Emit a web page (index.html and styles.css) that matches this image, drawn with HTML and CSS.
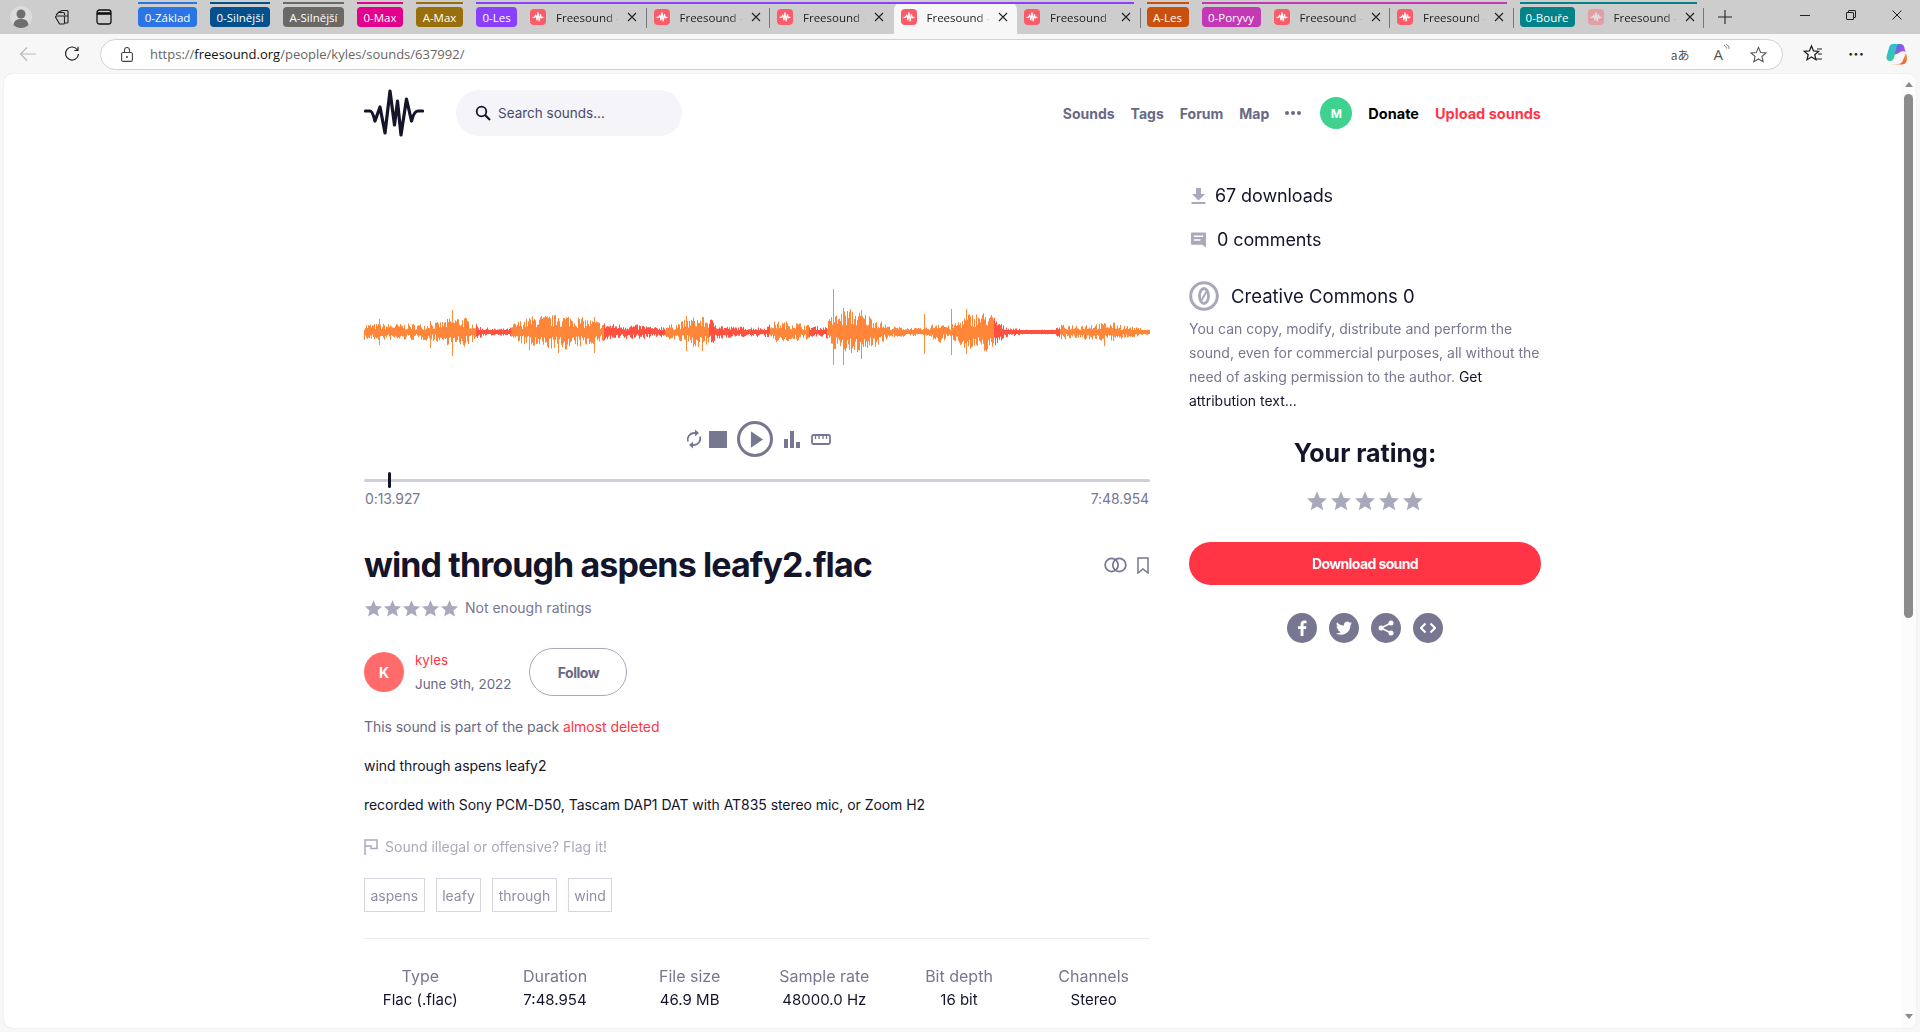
FILE: index.html
```html
<!DOCTYPE html>
<html lang="en">
<head>
    <meta charset="UTF-8">
    <title>Freesound - wind through aspens leafy2.flac</title>
    <link rel="stylesheet" href="styles.css">
</head>
<body>
    <svg class="sprite" width="0" height="0">
        <symbol id="fav" viewBox="0 0 16 16">
            <rect width="16" height="16" rx="4" fill="#fd5b69"/>
            <path d="M2.5 8.3H4.6L5.8 6 7 11 8 3.5 9.2 12 10.4 5.5 11.4 9 12 8.3H13.5" fill="none" stroke="#fff" stroke-width="1.2" stroke-linejoin="round"/>
        </symbol>
        <symbol id="star" viewBox="0 0 24 24">
            <path d="M12 1.5l3.1 7.2 7.7.7-5.8 5.1 1.8 7.6L12 18.1l-6.800 4 1.800-7.600L1.200 9.400l7.700-.700z"/>
        </symbol>
        <symbol id="close" viewBox="0 0 10 10">
            <path d="M1 1l8 8M9 1l-8 8" fill="none" stroke="#222" stroke-width="1.100"/>
        </symbol>
    </svg>

    <!-- browser tab strip -->
    <div class="tabstrip">
        <div class="strip-icons">
            <svg class="profile" viewBox="0 0 22 22"><circle cx="11" cy="11" r="11" fill="#dcdcdc"/><circle cx="11" cy="8" r="4.500" fill="#6e6e6e"/><path d="M3.500 19c.5-4.500 3.500-6 7.500-6s7 1.500 7.500 6c-2 2-4.500 3-7.500 3s-5.500-1-7.500-3z" fill="#6e6e6e"/></svg>
            <svg class="strip-icon ws" viewBox="0 0 16 16"><path d="M4 3.500L8 1.500h5a1 1 0 011 1v4M2 6l2.500-2.500h5a1 1 0 011 1v2M1.500 8a1 1 0 011-1h4l3 0a1 1 0 011 1v6a1 1 0 01-1 1H6a1 1 0 01-1-1zM11 7h3v6a1 1 0 01-1 1h-2" fill="none" stroke="#222" stroke-width="1.100"/></svg>
            <svg class="strip-icon tb" viewBox="0 0 16 16"><rect x="1" y="1" width="14" height="14" rx="2.500" fill="none" stroke="#111" stroke-width="1.300"/><path d="M1 4.500h14" stroke="#111" stroke-width="2.600"/></svg>
        </div>

        <div class="group g-zaklad"><span class="chip">0-Základ</span></div>
        <div class="group g-silnejsi0"><span class="chip">0-Silnější</span></div>
        <div class="group g-silnejsiA"><span class="chip">A-Silnější</span></div>
        <div class="group g-max0"><span class="chip">0-Max</span></div>
        <div class="group g-maxA"><span class="chip">A-Max</span></div>
        <div class="group group-tabs g-les0">
            <span class="chip">0-Les</span>
            <div class="tab sep"><svg class="favicon"><use href="#fav"/></svg><span class="tab-title">Freesound -</span><svg class="tab-x"><use href="#close"/></svg></div>
            <div class="tab sep"><svg class="favicon"><use href="#fav"/></svg><span class="tab-title">Freesound -</span><svg class="tab-x"><use href="#close"/></svg></div>
            <div class="tab"><svg class="favicon"><use href="#fav"/></svg><span class="tab-title">Freesound -</span><svg class="tab-x"><use href="#close"/></svg></div>
            <div class="tab active"><svg class="favicon"><use href="#fav"/></svg><span class="tab-title">Freesound -</span><svg class="tab-x"><use href="#close"/></svg></div>
            <div class="tab sep"><svg class="favicon"><use href="#fav"/></svg><span class="tab-title">Freesound -</span><svg class="tab-x"><use href="#close"/></svg></div>
        </div>
        <div class="group g-lesA"><span class="chip">A-Les</span></div>
        <div class="group group-tabs g-poryvy">
            <span class="chip">0-Poryvy</span>
            <div class="tab sep"><svg class="favicon"><use href="#fav"/></svg><span class="tab-title">Freesound -</span><svg class="tab-x"><use href="#close"/></svg></div>
            <div class="tab sep"><svg class="favicon"><use href="#fav"/></svg><span class="tab-title">Freesound -</span><svg class="tab-x"><use href="#close"/></svg></div>
        </div>
        <div class="group group-tabs g-boure">
            <span class="chip">0-Bouře</span>
            <div class="tab sep faded"><svg class="favicon"><use href="#fav"/></svg><span class="tab-title">Freesound -</span><svg class="tab-x"><use href="#close"/></svg></div>
        </div>
        <svg class="new-tab" viewBox="0 0 14 14"><path d="M7 0v14M0 7h14" stroke="#222" stroke-width="1.100"/></svg>

        <div class="window-btns">
            <svg viewBox="0 0 10 10"><path d="M0 5.500h10" stroke="#222"/></svg>
            <svg viewBox="0 0 10 10"><path d="M.5 2.500h6.500a.5.5 0 01.5.5v6.500H1a.5.5 0 01-.5-.5zM2.500 2.500V1a.5.5 0 01.5-.5h6a.5.5 0 01.5.5v6a.5.5 0 01-.5.5H7.500" fill="none" stroke="#222"/></svg>
            <svg viewBox="0 0 10 10"><path d="M.5.500l9 9M9.500.500l-9 9" stroke="#222"/></svg>
        </div>
    </div>

    <!-- address bar -->
    <div class="toolbar">
        <svg class="tool-icon back" viewBox="0 0 18 16"><path d="M17 8H1.500M8 1.500L1.500 8 8 14.500" fill="none" stroke="#b9b9b9" stroke-width="1.200"/></svg>
        <svg class="tool-icon reload" viewBox="0 0 16 16"><path d="M13.500 4A6.500 6.500 0 1014.500 8M14 .8V4.500H10.300" fill="none" stroke="#222" stroke-width="1.200"/></svg>
        <div class="addressbar">
            <svg class="lock" viewBox="0 0 12 15"><rect x=".6" y="5.500" width="10.800" height="8.900" rx="1.500" fill="none" stroke="#444" stroke-width="1.100"/><path d="M3.500 5.500V3a2.500 2.500 0 015 0v2.500" fill="none" stroke="#444" stroke-width="1.100"/><circle cx="6" cy="10" r="1" fill="#444"/></svg>
            <span class="url">https://<b>freesound.org</b>/people/kyles/sounds/637992/</span>
            <span class="addr-right">
                <span class="translate">aあ</span>
                <span class="aloud">A<svg viewBox="0 0 8 10"><path d="M1 1c2 1 3 2.500 3 4M3.500 0c2 1.200 3.500 3 3.500 5.500" fill="none" stroke="#555" stroke-width=".9"/></svg></span>
                <svg class="addr-star" viewBox="0 0 24 24"><path d="M12 2l3 7.200 7.500.6-5.700 5 1.800 7.400L12 18.300l-6.600 3.900 1.800-7.400-5.700-5L9 9.200z" fill="none" stroke="#555" stroke-width="1.500"/></svg>
            </span>
        </div>
        <svg class="tool-icon favs" viewBox="0 0 20 20"><path d="M8.500 2l2 5 5 .4-3.800 3.300 1.200 5-4.400-2.700L4 15.700l1.200-5-3.800-3.300 5-.4z" fill="none" stroke="#222" stroke-width="1.300"/><path d="M14 5h5M15 10h4M12.500 15H19" stroke="#222" stroke-width="1.200"/></svg>
        <span class="tool-dots">···</span>
        <svg class="copilot" viewBox="0 0 22 22">
            <defs>
                <linearGradient id="cpA" x1="0" y1="0" x2="1" y2="1"><stop offset="0" stop-color="#2bb5f0"/><stop offset="1" stop-color="#3ed27a"/></linearGradient>
                <linearGradient id="cpB" x1="0" y1="0" x2="1" y2="1"><stop offset="0" stop-color="#3c6cf0"/><stop offset="1" stop-color="#d94fc8"/></linearGradient>
                <linearGradient id="cpC" x1="0" y1="0" x2="1" y2="1"><stop offset="0" stop-color="#f5d33a"/><stop offset="1" stop-color="#f0563a"/></linearGradient>
            </defs>
            <path d="M7 1h7c-2.500 1-3.500 3-4 6l-2 8c-.5 2-2 3-4 3C1.500 18 0 16 .5 13.500L3 5c.6-2.500 2-4 4-4z" fill="url(#cpA)"/>
            <path d="M14 1c2.500 0 4 1.500 4.500 4l1 4c-1.500-1-4-1-6 .5-2 1.500-3.500 2-5 1.500l1.500-5C10.500 3 11.500 1 14 1z" fill="url(#cpB)"/>
            <path d="M4 21h8c2.500 0 4-1.500 5-4l3-7c1 3.500 1.500 7 0 9.500C19 21 17 21.500 15 21.500z" fill="url(#cpC)"/>
        </svg>
    </div>

    <div class="viewport">
        <div class="page">
            <header class="site-header">
                <a class="logo">
                    <svg viewBox="0 0 60 48"><path d="M1.500 22H6Q8.500 22 11 32L16 18 21 44 26 2 30.500 36 33.500 12 37 46 42.500 10 47.500 32Q50 22 54 22H58.500" fill="none" stroke="#14142b" stroke-width="3.200" stroke-linejoin="round" stroke-linecap="round"/></svg>
                </a>
                <div class="search">
                    <svg viewBox="0 0 16 16"><circle cx="6.500" cy="6.500" r="4.800" fill="none" stroke="#14142b" stroke-width="1.800"/><path d="M10 10l5 5" stroke="#14142b" stroke-width="2.200"/></svg>
                    <span>Search sounds...</span>
                </div>
                <nav class="nav">
                    <a class="nav-link">Sounds</a>
                    <a class="nav-link">Tags</a>
                    <a class="nav-link">Forum</a>
                    <a class="nav-link">Map</a>
                    <a class="nav-more"><i></i><i></i><i></i></a>
                    <span class="me">M</span>
                    <a class="donate">Donate</a>
                    <a class="upload">Upload sounds</a>
                </nav>
            </header>

            <main class="columns">
                <section class="left">
                    <canvas id="wave" width="786" height="160"></canvas>

                    <div class="controls">
                        <svg class="c-loop" viewBox="0 0 16 20"><path d="M2 12.500A6.500 6.500 0 018 4h2M14 7.500A6.500 6.500 0 018 16H6" fill="none" stroke="#777792" stroke-width="1.800"/><path d="M9 0.500L13 4 9 7.500zM7 12.500L3 16l4 3.500z" fill="#777792"/></svg>
                        <span class="c-stop"></span>
                        <span class="c-play"><svg viewBox="0 0 14 18"><path d="M1 0l13 9-13 9z" fill="#777792"/></svg></span>
                        <svg class="c-bars" viewBox="0 0 16 17"><path d="M0 8h4v9H0zM6 0h4v17H6zM12 11h4v6h-4z" fill="#777792"/></svg>
                        <svg class="c-ruler" viewBox="0 0 20 11"><rect x="1" y="1" width="18" height="9" rx="1.500" fill="none" stroke="#777792" stroke-width="1.800"/><path d="M4.500 1v4M8 1v4M12 1v4M15.500 1v4" stroke="#777792" stroke-width="1.300"/></svg>
                    </div>

                    <div class="progress"><span class="progress-head"></span></div>
                    <div class="times"><span>0:13.927</span><span>7:48.954</span></div>

                    <div class="title-row">
                        <h1>wind through aspens leafy2.flac</h1>
                        <div class="title-icons">
                            <svg class="rings" viewBox="0 0 24 16"><circle cx="8" cy="8" r="6.800" fill="none" stroke="#777792" stroke-width="1.800"/><circle cx="16" cy="8" r="6.800" fill="none" stroke="#777792" stroke-width="1.800"/></svg>
                            <svg class="bookmark" viewBox="0 0 12 17"><path d="M1 1h10v15L6 12 1 16z" fill="none" stroke="#777792" stroke-width="1.500"/></svg>
                        </div>
                    </div>

                    <div class="rating-row">
                        <span class="stars small"><svg><use href="#star"/></svg><svg><use href="#star"/></svg><svg><use href="#star"/></svg><svg><use href="#star"/></svg><svg><use href="#star"/></svg></span>
                        <span>Not enough ratings</span>
                    </div>

                    <div class="author">
                        <span class="author-pic">K</span>
                        <div class="author-meta">
                            <a class="red">kyles</a>
                            <span>June 9th, 2022</span>
                        </div>
                        <button class="follow">Follow</button>
                    </div>

                    <p class="pack">This sound is part of the pack <a class="red">almost deleted</a></p>
                    <p class="desc">wind through aspens leafy2</p>
                    <p class="desc">recorded with Sony PCM-D50, Tascam DAP1 DAT with AT835 stereo mic, or Zoom H2</p>
                    <p class="flag">
                        <svg viewBox="0 0 14 16"><path d="M1 16V1h12v8.500H7V7H1" fill="none" stroke="#a9a9bd" stroke-width="1.500"/></svg>
                        Sound illegal or offensive? Flag it!
                    </p>

                    <div class="tags">
                        <a class="tag">aspens</a>
                        <a class="tag">leafy</a>
                        <a class="tag">through</a>
                        <a class="tag">wind</a>
                    </div>

                    <hr class="rule">

                    <dl class="specs">
                        <div><dt>Type</dt><dd>Flac (.flac)</dd></div>
                        <div><dt>Duration</dt><dd>7:48.954</dd></div>
                        <div><dt>File size</dt><dd>46.9 MB</dd></div>
                        <div><dt>Sample rate</dt><dd>48000.0 Hz</dd></div>
                        <div><dt>Bit depth</dt><dd>16 bit</dd></div>
                        <div><dt>Channels</dt><dd>Stereo</dd></div>
                    </dl>
                </section>

                <aside class="right">
                    <div class="stat downloads">
                        <svg viewBox="0 0 15 16"><path d="M5 0h5v6h4L7.500 12.500 1 6h4zM.5 14h14v2H.5z" fill="#a9a9bd"/></svg>
                        67 downloads
                    </div>
                    <div class="stat comments">
                        <svg viewBox="0 0 16 16"><path d="M1 0h14a1 1 0 011 1v15l-4-3H1a1 1 0 01-1-1V1a1 1 0 011-1z" fill="#a9a9bd"/><path d="M3 4h10M3 8h7" stroke="#fff" stroke-width="1.600"/></svg>
                        0 comments
                    </div>
                    <div class="license">
                        <svg class="cc-zero" viewBox="0 0 30 30"><circle cx="15" cy="15" r="13.300" fill="none" stroke="#a9a9bd" stroke-width="3"/><ellipse cx="15" cy="15" rx="4.500" ry="7.500" fill="none" stroke="#a9a9bd" stroke-width="2.800"/><path d="M11.500 21L18.500 9" stroke="#a9a9bd" stroke-width="2"/></svg>
                        Creative Commons 0
                    </div>
                    <p class="license-text">You can copy, modify, distribute and perform the sound, even for commercial purposes, all without the need of asking permission to the author. <a>Get attribution text...</a></p>

                    <h2>Your rating:</h2>
                    <div class="stars big"><svg><use href="#star"/></svg><svg><use href="#star"/></svg><svg><use href="#star"/></svg><svg><use href="#star"/></svg><svg><use href="#star"/></svg></div>

                    <button class="download">Download sound</button>

                    <div class="social">
                        <span class="circle"><svg viewBox="0 0 16 16"><path d="M9.500 16V9h2.500l.4-2.800H9.500V4.500c0-.8.3-1.300 1.400-1.300h1.600V.7C12.200.6 11.300.5 10.300.5 8.100.5 6.600 1.800 6.600 4.200v2H4V9h2.600v7z" fill="#fff"/></svg></span>
                        <span class="circle"><svg viewBox="0 0 16 16"><path d="M16 3.200c-.6.300-1.200.4-1.900.5.700-.4 1.200-1 1.400-1.800-.6.400-1.300.6-2 .8A3.300 3.300 0 007.900 5.700 9.300 9.300 0 011.100 2.300a3.300 3.300 0 001 4.400c-.5 0-1-.2-1.500-.4 0 1.600 1.100 3 2.600 3.300-.5.100-1 .1-1.500 0 .4 1.300 1.600 2.200 3.100 2.300A6.600 6.600 0 010 13.200 9.300 9.300 0 0014.400 5c.6-.5 1.200-1.100 1.600-1.800z" fill="#fff"/></svg></span>
                        <span class="circle"><svg viewBox="0 0 16 16"><circle cx="3" cy="8" r="2.500" fill="#fff"/><circle cx="13" cy="3" r="2.500" fill="#fff"/><circle cx="13" cy="13" r="2.500" fill="#fff"/><path d="M13 3L3 8l10 5" fill="none" stroke="#fff" stroke-width="1.500"/></svg></span>
                        <span class="circle"><svg viewBox="0 0 16 12"><path d="M5.500 1.500L1 6l4.500 4.500M10.500 1.500L15 6l-4.500 4.500" fill="none" stroke="#fff" stroke-width="2"/></svg></span>
                    </div>
                </aside>
            </main>
        </div>

        <div class="scrollbar">
            <span class="arrow up"></span>
            <span class="thumb"></span>
            <span class="arrow down"></span>
        </div>
    </div>

    <script src="wave.js"></script>
</body>
</html>
```

FILE: styles.css
```css
/* Reset and general styling */
* {
    margin: 0;
    padding: 0;
    box-sizing: border-box;
}

html, body {
    height: 1032px;
    overflow: hidden;
}

body {
    display: flex;
    flex-direction: column;
    background-color: #f7f7f7;
    color: #14142b;
    font-family: Inter, "Noto Sans", sans-serif;
    font-size: 14px;
}

.sprite {
    position: absolute;
}

/* Browser tab strip */
.tabstrip {
    display: flex;
    align-items: flex-start;
    height: 34px;
    flex: none;
    padding-top: 2px;
    background-color: #cdcdcd;
    font-family: "Open Sans", "Noto Sans", sans-serif;
    font-size: 11.5px;
}

.strip-icons {
    display: flex;
    align-items: center;
    width: 138px;
    height: 30px;
    padding-left: 10px;
    flex: none;
}

.profile {
    width: 22px;
    height: 22px;
}

.strip-icon {
    width: 16px;
    height: 16px;
}

.ws {
    margin-left: 22px;
}

.tb {
    margin-left: 26px;
}

/* Tab groups: colour and chip width per group */
.g-zaklad { --c: #2b74e4; --w: 59px; }
.g-silnejsi0 { --c: #03508c; --w: 60px; }
.g-silnejsiA { --c: #6b6966; --w: 61px; }
.g-max0 { --c: #e3008c; --w: 46px; }
.g-maxA { --c: #986f0b; --w: 47px; }
.g-les0 { --c: #8a3ffc; --w: 41px; }
.g-lesA { --c: #ca5010; --w: 42px; }
.g-poryvy { --c: #c239b3; --w: 59px; }
.g-boure { --c: #038387; --w: 55px; }

.group {
    position: relative;
    display: flex;
    height: 32px;
    margin-right: 13px;
}

.group::before {
    content: "";
    position: absolute;
    z-index: 1;
    left: 0;
    right: 0;
    top: 0;
    height: 2px;
    background-color: var(--c);
}

.group-tabs {
    margin-right: 6px;
}

.group-tabs::before {
    right: 7px;
}

.chip {
    display: flex;
    align-items: center;
    justify-content: center;
    width: var(--w);
    height: 20px;
    margin-top: 5px;
    flex: none;
    background-color: var(--c);
    border-radius: 4px;
    color: #fff;
    white-space: nowrap;
}

.chip + .tab {
    margin-left: 6px;
}

.tab {
    position: relative;
    display: flex;
    align-items: center;
    width: 123.500px;
    height: 32px;
    padding: 0 0 2px 7px;
    color: #222;
}

.tab.sep::after {
    content: "";
    position: absolute;
    right: 0;
    top: 6px;
    height: 20px;
    border-right: 1px solid #777;
}

.tab.active {
    background-color: #f7f7f7;
    border-radius: 8px 8px 0 0;
}

.favicon {
    width: 16px;
    height: 16px;
    flex: none;
}

.tab-title {
    width: 66px;
    margin-left: 10px;
    flex: none;
    white-space: nowrap;
    -webkit-mask-image: linear-gradient(90deg, #000 78%, transparent 95%);
    mask-image: linear-gradient(90deg, #000 78%, transparent 95%);
}

.tab-x {
    width: 10px;
    height: 10px;
    margin-left: 5px;
    flex: none;
}

.faded .favicon {
    opacity: 0.4;
}

.new-tab {
    width: 14px;
    height: 14px;
    margin: 8px 0 0 8px;
    flex: none;
}

.window-btns {
    display: flex;
    gap: 36px;
    margin-left: auto;
    padding: 8px 18px 0 0;
}

.window-btns svg {
    width: 10px;
    height: 10px;
}

/* Address bar */
.toolbar {
    display: flex;
    align-items: center;
    height: 40px;
    flex: none;
    padding-left: 19px;
}

.tool-icon {
    flex: none;
}

.back {
    width: 18px;
    height: 16px;
}

.reload {
    width: 16px;
    height: 16px;
    margin-left: 27px;
}

.addressbar {
    display: flex;
    align-items: center;
    width: 1683px;
    height: 31px;
    margin-left: 20px;
    padding: 0 15px 0 20px;
    background-color: #fff;
    border: 1px solid #d2d2d2;
    border-radius: 16px;
}

.lock {
    width: 12px;
    height: 15px;
    flex: none;
}

.url {
    margin-left: 17px;
    color: #666;
    font-family: "Open Sans", "Noto Sans", sans-serif;
    font-size: 13px;
}

.url b {
    color: #111;
    font-weight: 400;
}

.addr-right {
    display: flex;
    align-items: center;
    margin-left: auto;
    color: #555;
}

.translate {
    font-family: "Noto Sans CJK JP", sans-serif;
    font-size: 12px;
}

.aloud {
    display: flex;
    align-items: flex-start;
    margin: 0 20px 0 24px;
    font-family: "Open Sans", sans-serif;
    font-size: 15px;
}

.aloud svg {
    width: 7px;
    height: 9px;
}

.addr-star {
    width: 17px;
    height: 17px;
}

.favs {
    width: 20px;
    height: 20px;
    margin-left: 20px;
}

.tool-dots {
    margin-left: 25px;
    color: #222;
    font-weight: 700;
    font-size: 16px;
}

.copilot {
    width: 22px;
    height: 22px;
    margin-left: 22px;
    flex: none;
}

/* Page frame */
.viewport {
    display: flex;
    flex: none;
    height: 954px;
    margin: 0 4px;
    overflow: hidden;
    background-color: #fff;
    border-radius: 8px;
    box-shadow: 0 0 1px #c8c8c8;
}

.page {
    flex: 1;
    padding-left: 360px;
    overflow: hidden;
}

.scrollbar {
    display: flex;
    flex-direction: column;
    align-items: center;
    width: 15px;
    flex: none;
    background-color: #fcfcfc;
}

.thumb {
    width: 9px;
    height: 524px;
    margin-top: 7px;
    background-color: #8b8b8b;
    border-radius: 5px;
}

.arrow {
    width: 0;
    height: 0;
    border-left: 4.500px solid transparent;
    border-right: 4.500px solid transparent;
}

.arrow.up {
    margin-top: 8px;
    border-bottom: 5px solid #8b8b8b;
}

.arrow.down {
    margin-top: auto;
    margin-bottom: 9px;
    border-top: 5px solid #8b8b8b;
}

/* Site header */
.site-header {
    display: flex;
    align-items: center;
    width: 1177px;
    height: 46px;
    margin: 16px 0 36px;
}

.logo svg {
    display: block;
    width: 60px;
    height: 48px;
}

.search {
    display: flex;
    align-items: center;
    width: 226px;
    height: 46px;
    margin-left: 32px;
    padding-left: 19px;
    background-color: #f4f4f9;
    border-radius: 23px;
    color: #4a4a68;
    font-size: 13.500px;
}

.search svg {
    width: 16px;
    height: 16px;
}

.search span {
    margin: -1px 0 0 7px;
}

.nav {
    display: flex;
    align-items: center;
    margin-left: auto;
    font-weight: 700;
}

.nav-link {
    margin-right: 16px;
    color: #696985;
}

.nav-more {
    display: flex;
    gap: 2px;
    margin-right: 19px;
}

.nav-more i {
    width: 4px;
    height: 4px;
    background-color: #696985;
    border-radius: 50%;
}

.me {
    display: flex;
    align-items: center;
    justify-content: center;
    width: 32px;
    height: 32px;
    margin-right: 16px;
    background-color: #3fd18f;
    border-radius: 50%;
    color: #fff;
    font-size: 12px;
}

.donate {
    margin-right: 16px;
    color: #000;
    font-size: 14.500px;
}

.upload {
    color: #ff3546;
    font-size: 14.500px;
}

/* Two columns */
.columns {
    display: flex;
    gap: 39px;
    width: 1177px;
}

.left {
    width: 786px;
    flex: none;
    padding-top: 80px;
}

.right {
    width: 352px;
    flex: none;
    padding-top: 10px;
}

/* Player */
#wave {
    display: block;
    width: 786px;
    height: 160px;
}

.controls {
    display: flex;
    align-items: center;
    justify-content: center;
    height: 36px;
    margin-top: 9px;
    padding-left: 2px;
}

.c-loop {
    width: 16px;
    height: 20px;
}

.c-stop {
    width: 18px;
    height: 17px;
    margin-left: 7px;
    background-color: #777792;
}

.c-play {
    display: flex;
    align-items: center;
    justify-content: center;
    width: 36px;
    height: 36px;
    margin-left: 10px;
    padding-left: 3px;
    border: 3px solid #777792;
    border-radius: 50%;
}

.c-play svg {
    width: 13px;
    height: 17px;
}

.c-bars {
    width: 16px;
    height: 17px;
    margin-left: 11px;
}

.c-ruler {
    width: 20px;
    height: 11px;
    margin-left: 11px;
}

.progress {
    position: relative;
    height: 3px;
    margin-top: 22px;
    background-color: #cfcfd9;
    border-radius: 2px;
}

.progress-head {
    position: absolute;
    left: 24px;
    top: -7px;
    width: 3px;
    height: 16px;
    background-color: #14142b;
    border-radius: 2px;
}

.times {
    display: flex;
    justify-content: space-between;
    margin-top: 7px;
    padding: 0 1px;
    color: #777792;
    letter-spacing: -0.1px;
    line-height: 20px;
}

/* Title and details */
.title-row {
    display: flex;
    align-items: center;
    justify-content: space-between;
    margin-top: 34px;
}

h1 {
    font-size: 34px;
    font-weight: 700;
    line-height: 44px;
    letter-spacing: -0.900px;
}

.title-icons {
    display: flex;
    align-items: center;
    gap: 10px;
    padding-right: 1px;
}

.rings {
    width: 23px;
    height: 16px;
}

.bookmark {
    width: 12px;
    height: 17px;
}

.stars {
    display: inline-flex;
    fill: #a9a9bd;
}

.stars.small svg {
    width: 19px;
    height: 19px;
}

.stars.big {
    display: flex;
    justify-content: center;
    height: 20px;
    margin-top: 21px;
}

.stars.big svg {
    width: 24px;
    height: 22px;
}

.rating-row {
    display: flex;
    align-items: center;
    gap: 6px;
    margin-top: 11px;
    color: #777792;
    line-height: 20px;
}

.author {
    display: flex;
    align-items: center;
    margin-top: 30px;
}

.author-pic {
    display: flex;
    align-items: center;
    justify-content: center;
    width: 40px;
    height: 40px;
    background-color: #ff6b6b;
    border-radius: 50%;
    color: #fff;
    font-weight: 700;
}

.author-meta {
    display: flex;
    flex-direction: column;
    gap: 4px;
    margin-left: 11px;
    color: #696985;
    font-size: 13.400px;
    line-height: 20px;
}

.red {
    color: #ff3546;
}

.follow {
    width: 98px;
    height: 48px;
    margin-left: 18px;
    background: none;
    border: 1px solid #a9a9bd;
    border-radius: 24px;
    color: #696985;
    font-family: inherit;
    font-size: 14px;
    font-weight: 700;
    letter-spacing: -0.500px;
}

.pack {
    margin-top: 21px;
    color: #696985;
    letter-spacing: -0.060px;
    line-height: 20px;
}

.desc {
    margin-top: 19px;
    letter-spacing: -0.050px;
    line-height: 20px;
}

.flag {
    display: flex;
    align-items: center;
    gap: 7px;
    margin-top: 22px;
    color: #a9a9bd;
    line-height: 20px;
}

.flag svg {
    width: 14px;
    height: 16px;
}

.tags {
    display: flex;
    gap: 11px;
    margin-top: 21px;
}

.tag {
    display: flex;
    align-items: center;
    height: 34px;
    padding: 0 5.500px;
    border: 1px solid #d6d6e0;
    color: #8e8ea6;
}

.rule {
    margin-top: 26px;
    border: none;
    border-top: 1px solid #eeeef2;
}

.specs {
    display: grid;
    grid-template-columns: repeat(6, 1fr);
    margin: 25px -11px 0;
    text-align: center;
}

.specs dt {
    color: #777792;
    font-size: 16px;
    line-height: 24px;
}

.specs dd {
    font-size: 15px;
    line-height: 23px;
}

/* Sidebar */
.stat {
    display: flex;
    align-items: center;
    font-size: 18px;
    letter-spacing: -0.100px;
    line-height: 27px;
}

.stat svg {
    width: 15px;
    height: 16px;
    margin-left: 2px;
}

.downloads {
    gap: 9px;
}

.comments {
    gap: 11px;
    margin-top: 17px;
}

.license {
    display: flex;
    align-items: center;
    gap: 12px;
    margin-top: 28px;
    font-size: 18.500px;
    line-height: 30px;
}

.cc-zero {
    width: 30px;
    height: 30px;
}

.license-text {
    margin-top: 6px;
    color: #777792;
    line-height: 24px;
}

.license-text a {
    color: #14142b;
}

h2 {
    margin-top: 24px;
    font-size: 25px;
    font-weight: 700;
    line-height: 32px;
    text-align: center;
}

.download {
    display: block;
    width: 352px;
    height: 43px;
    margin-top: 32px;
    background-color: #ff3546;
    border: none;
    border-radius: 22px;
    color: #fff;
    font-family: inherit;
    font-size: 14px;
    font-weight: 700;
    letter-spacing: -0.600px;
}

.social {
    display: flex;
    justify-content: center;
    gap: 12px;
    margin-top: 28px;
}

.circle {
    display: flex;
    align-items: center;
    justify-content: center;
    width: 30px;
    height: 30px;
    background-color: #777792;
    border-radius: 50%;
}

.circle svg {
    width: 16px;
    height: 16px;
}
```

FILE: wave.js
```js
const canvas = document.getElementById('wave');
const ctx = canvas.getContext('2d');
const mid = 80;

const envelope = [
    [0, 7], [60, 7], [78, 9], [88, 13], [100, 13], [115, 5], [128, 3], [145, 3], [150, 8], [170, 14],
    [205, 15], [230, 10], [245, 7], [280, 6], [290, 4], [310, 7], [330, 13], [345, 12], [360, 5],
    [400, 4], [410, 9], [430, 9], [445, 6], [460, 4], [466, 13], [485, 20], [510, 13], [525, 5],
    [560, 3], [575, 10], [585, 5], [605, 16], [625, 17], [640, 5], [660, 2], [690, 2], [696, 6],
    [750, 8], [765, 5], [786, 2]
];

// a few single spikes: x, up, down
const spikes = [
    [15, 13, 13], [66, 11, 16], [88, 22, 24], [165, 14, 18], [194, 14, 21], [230, 15, 21], [322, 16, 19],
    [338, 15, 19], [469, 43, 33], [479, 24, 33], [497, 22, 27], [560, 18, 22], [587, 23, 23], [602, 23, 22],
    [740, 9, 14]
];

// stretches where the trace goes red
const redZones = [[112, 146], [240, 300], [345, 405], [445, 462], [630, 695]];

// small seeded generator so every run gives the same picture
let seed = 7;
function rand() {
    seed = (seed * 16807) % 2147483647;
    return seed / 2147483647;
}

function ampAt(x) {
    for (let i = 1; i < envelope.length; i++) {
        if (x <= envelope[i][0]) {
            const a = envelope[i - 1];
            const b = envelope[i];
            return a[1] + (b[1] - a[1]) * (x - a[0]) / (b[0] - a[0]);
        }
    }
    return 2;
}

function colorAt(x) {
    const red = redZones.some(([from, to]) => x >= from && x <= to);
    return red ? '#ff5040' : '#ff8638';
}

ctx.lineWidth = 1;
for (let x = 0; x < canvas.width; x++) {
    const env = ampAt(x);
    const up = Math.max(2, env * (0.3 + rand() * 0.9));
    const down = Math.max(2, env * (0.3 + rand() * 0.9));
    ctx.strokeStyle = colorAt(x);
    ctx.beginPath();
    ctx.moveTo(x + 0.5, mid - up);
    ctx.lineTo(x + 0.5, mid + down);
    ctx.stroke();
}

ctx.strokeStyle = '#ff8a38';
spikes.forEach(([x, up, down]) => {
    ctx.beginPath();
    ctx.moveTo(x + 0.5, mid - up);
    ctx.lineTo(x + 0.5, mid + down);
    ctx.stroke();
});
```
